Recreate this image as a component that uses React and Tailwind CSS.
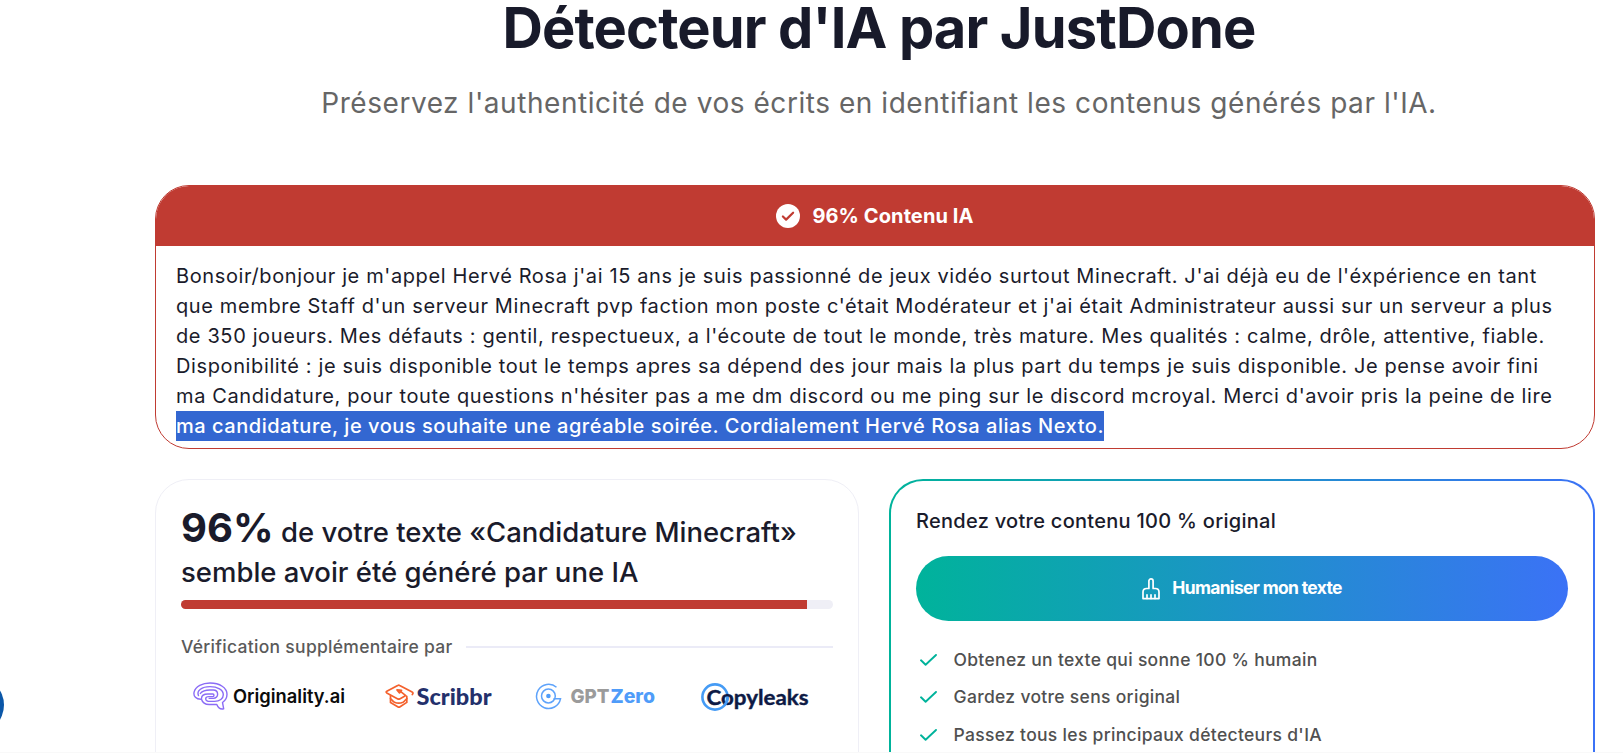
import React from 'react';

const analysedLines = [
    "Bonsoir/bonjour je m'appel Hervé Rosa j'ai 15 ans je suis passionné de jeux vidéo surtout Minecraft. J'ai déjà eu de l'éxpérience en tant",
    "que membre Staff d'un serveur Minecraft pvp faction mon poste c'était Modérateur et j'ai était Administrateur aussi sur un serveur a plus",
    "de 350 joueurs. Mes défauts : gentil, respectueux, a l'écoute de tout le monde, très mature. Mes qualités : calme, drôle, attentive, fiable.",
    "Disponibilité : je suis disponible tout le temps apres sa dépend des jour mais la plus part du temps je suis disponible. Je pense avoir fini",
    "ma Candidature, pour toute questions n'hésiter pas a me dm discord ou me ping sur le discord mcroyal. Merci d'avoir pris la peine de lire",
];
const selectedLine = "ma candidature, je vous souhaite une agréable soirée. Cordialement Hervé Rosa alias Nexto.";

const benefits = [
    "Obtenez un texte qui sonne 100 % humain",
    "Gardez votre sens original",
    "Passez tous les principaux détecteurs d'IA",
];

const score = 96;

function CheckBadgeIcon() {
    return (
        <svg className="h-6 w-6" viewBox="0 0 24 24" fill="none">
            <circle cx="12" cy="12" r="12" fill="#fff" />
            <path d="M6.9 12.5l3.2 3.1 7-6.9" stroke="#c03b32" strokeWidth="2.2" strokeLinecap="round" strokeLinejoin="round" />
        </svg>
    );
}

function BroomIcon() {
    return (
        <svg className="h-[22px] w-[18px]" viewBox="0 0 18 22" fill="none" stroke="#fff" strokeWidth="1.7" strokeLinejoin="round" strokeLinecap="round">
            <path d="M6.9 10.500V3a2.1 2.1 0 0 1 4.2 0v7.500h2.2c2.3 0 3.700 1.300 3.700 3.600v6.500H1v-6.500c0-2.300 1.400-3.600 3.700-3.600z" />
            <path d="M5 16.8v3.6M9 16.8v3.6M13 16.8v3.6" />
        </svg>
    );
}

function CheckIcon() {
    return (
        <svg className="h-3 w-[17px] shrink-0" viewBox="0 0 17 12" fill="none">
            <path d="M1 6.3l4.6 4.5L16 1" stroke="#00b39b" strokeWidth="1.9" strokeLinecap="round" strokeLinejoin="round" />
        </svg>
    );
}

// --- Partner logos ---
function OriginalityLogo() {
    return (
        <svg className="h-[30px] w-[154px]" viewBox="0 0 154 30">
            <g fill="none" stroke="#8b6cf6" strokeWidth="1.4" strokeLinecap="round" strokeLinejoin="round">
                <path d="M8.500 18.200C3 18.500.2 15 1.100 11.200 2.400 5.500 9.500 2 17 2c9.800 0 17 4.800 17 11.300 0 3.500-1.700 6.300-4.500 8.200l1.200 6.300c-3.300.8-5.500-.8-6.900-4.300h-7.600c-3.500 0-6.700-1.700-7.700-5.300z" />
                <path d="M5.500 14.600C3.200 9.500 9 5.600 17 5.600c7.600 0 13.300 3.200 13.300 8.100 0 3.900-3.600 6.700-8.800 6.700h-4.400c-3 0-4.400-1.100-4.400-2.700 0-1.500 1.400-2.100 3.200-2.100h4c1.400 0 1.400-2.600 0-2.600h-5c-4.200 0-6.300 1.500-6.400 4.400" />
                <path d="M7.400 12.400C9.200 10.200 12.500 9 16.800 9h3.400c5.800 0 6 8.400 0 8.400h-4" />
            </g>
            <text x="40" y="21.5" textLength="112" lengthAdjust="spacingAndGlyphs" fill="#0b0b0b" className="font-['Inter'] text-[18.5px] font-semibold">Originality.ai</text>
        </svg>
    );
}

function ScribbrLogo() {
    return (
        <svg className="h-[30px] w-[108px]" viewBox="0 0 108 30">
            <g fill="none" stroke="#f4612d" strokeWidth="1.7" strokeLinecap="round" strokeLinejoin="round">
                <path d="M27.300 13.600c1-1.400.9-2-.2-2.600L14.700 4.400c-.7-.4-1.300-.4-2 0L1.800 10.300c-.9.5-.9 1.100 0 1.600l11 6c.7.300 1.200.3 1.900 0l6.100-3.300-6.300-5" />
                <path d="M12 8.900l4.500.5-2 2.500z" />
                <path d="M5.500 14.500v6.900l7.200 4.300c.8.500 1.600.5 2.400 0l6.700-4.300v-6" />
                <path d="M5.500 17.600c1.500 1.200 2.200 2.700 4 3.600 2.800 1.300 5.800 1.200 8.500 0 1.800-.9 2.400-2.400 3.800-3.600" />
            </g>
            <text x="31.5" y="23.5" textLength="75" lengthAdjust="spacingAndGlyphs" fill="#23306b" className="font-['Lato'] text-[22px] font-black">Scribbr</text>
        </svg>
    );
}

function GptZeroLogo() {
    return (
        <svg className="h-[30px] w-[122px]" viewBox="0 0 122 30">
            <g fill="none" stroke="#5ea3fb" strokeWidth="1.5">
                <path d="M21.500 6.200A12.100 12.100 0 1 0 25.500 17.800H18.500" />
                <circle cx="13.400" cy="15" r="6.900" />
            </g>
            <circle cx="13.4" cy="15" r="2.3" fill="#4f9cf9" />
            <text x="35.5" y="22" textLength="39" lengthAdjust="spacingAndGlyphs" fill="#9b9b9b" className="font-['Inter'] text-[19px] font-extrabold">GPT</text>
            <text x="75.5" y="22" textLength="44.5" lengthAdjust="spacingAndGlyphs" fill="#4f9cf9" className="font-['Inter'] text-[19px] font-extrabold">Zero</text>
        </svg>
    );
}

function CopyleaksLogo() {
    return (
        <svg className="h-[30px] w-[110px]" viewBox="0 0 110 30">
            <circle cx="15" cy="16" r="12.6" fill="none" stroke="#459bf5" strokeWidth="2.6" />
            <text x="6.5" y="23.5" textLength="102" lengthAdjust="spacingAndGlyphs" fill="#0d1a45" stroke="#0d1a45" strokeWidth="0.4" className="font-['Lato'] text-[21.5px] font-bold">Copyleaks</text>
            <path d="M24.6 24.2A12.6 12.6 0 0 0 27.6 16" fill="none" stroke="#459bf5" strokeWidth="2.6" />
        </svg>
    );
}

function ResultCard() {
    return (
        <section className="h-[264px] overflow-hidden rounded-[34px] border border-[#c03b32] bg-white">
            <div className="flex h-[60px] items-center justify-center gap-3 bg-[#c03b32] text-white">
                <CheckBadgeIcon />
                <span className="text-[20px] font-bold tracking-[0.1px]">96% Contenu IA</span>
            </div>
            <div className="pt-[15px] pl-5 text-[20px] leading-[30px] tracking-[0.62px] whitespace-nowrap text-[#1a1b2b]">
                {analysedLines.map((line) => (
                    <p key={line}>{line}</p>
                ))}
                <p className="w-fit bg-[#3367d1] font-medium tracking-[0.53px] text-white">{selectedLine}</p>
            </div>
        </section>
    );
}

function ScoreCard() {
    return (
        <section className="h-[320px] rounded-[34px] border border-[#efeff6] px-[25px] pt-[28px]">
            <h2 className="text-[27.5px] leading-[40px] font-medium whitespace-nowrap text-[#1a1b2b]">
                <span className="text-[40px] font-bold">{score}%</span>
                {" "}de votre texte «Candidature Minecraft»
                <br />
                semble avoir été généré par une IA
            </h2>
            <div className="mt-[8px] h-[9px] overflow-hidden rounded-full bg-[#efeff6]">
                <div className="h-full bg-[#c03b32]" style={{ width: `${score}%` }} />
            </div>
            <div className="mt-[24px] flex items-center gap-[13px]">
                <span className="text-[17.5px] leading-[27px] font-medium tracking-[0.29px] whitespace-nowrap text-[#5a5a5a]">Vérification supplémentaire par</span>
                <div className="h-[2px] grow bg-[#ebebf7]" />
            </div>
            <div className="mt-[21px] flex items-center pl-[12px]">
                <OriginalityLogo />
                <div className="ml-[38px]"><ScribbrLogo /></div>
                <div className="ml-[42px]"><GptZeroLogo /></div>
                <div className="ml-[43px]"><CopyleaksLogo /></div>
            </div>
        </section>
    );
}

function HumanizeCard() {
    return (
        <section className="h-[320px] rounded-[34px] bg-[linear-gradient(90deg,#00b39b,#3b72f6)] p-[2px]">
            <div className="h-full rounded-[32px] bg-white px-[25px] pt-[25px]">
                <h3 className="text-[20px] leading-[30px] font-medium tracking-[0.28px] whitespace-nowrap text-[#1a1b2b]">Rendez votre contenu 100 % original</h3>
                <button className="mt-[20px] flex h-[65px] w-full items-center justify-center gap-[12px] rounded-full bg-[linear-gradient(90deg,#00b39b,#3b72f6)] text-white">
                    <BroomIcon />
                    <span className="text-[17.5px] font-bold tracking-[-0.68px]">Humaniser mon texte</span>
                </button>
                <ul className="mt-[20px] text-[17.5px] font-medium tracking-[0.31px] whitespace-nowrap text-[#505050]">
                    {benefits.map((benefit) => (
                        <li key={benefit} className="flex h-[37.5px] items-center gap-[16.5px] pl-[4px]">
                            <CheckIcon />
                            {benefit}
                        </li>
                    ))}
                </ul>
            </div>
        </section>
    );
}

export default function App() {
    return (
        <div className="relative h-[753px] w-[1623px] overflow-hidden bg-white font-['Inter',sans-serif]">
            <main className="ml-[155px] w-[1440px]">
                <header className="ml-[8px] h-[185px] text-center whitespace-nowrap">
                    <h1 className="h-[80px] text-[56px] leading-[56px] font-bold tracking-[-0.86px] text-[#181a2a]">Détecteur d'IA par JustDone</h1>
                    <p className="text-[28px] leading-[46px] tracking-[0.55px] text-[#666]">Préservez l'authenticité de vos écrits en identifiant les contenus générés par l'IA.</p>
                </header>
                <ResultCard />
                <div className="mt-[30px] grid grid-cols-[704px_706px] gap-[30px]">
                    <ScoreCard />
                    <HumanizeCard />
                </div>
            </main>
            {/* Floating help bubble, mostly off the left edge */}
            <div className="absolute top-[677px] left-[-52px] h-[56px] w-[56px] rounded-full bg-[#0b57a8]" />
            <div className="absolute bottom-0 left-0 h-px w-full bg-[#f9f9f9]" />
        </div>
    );
}
